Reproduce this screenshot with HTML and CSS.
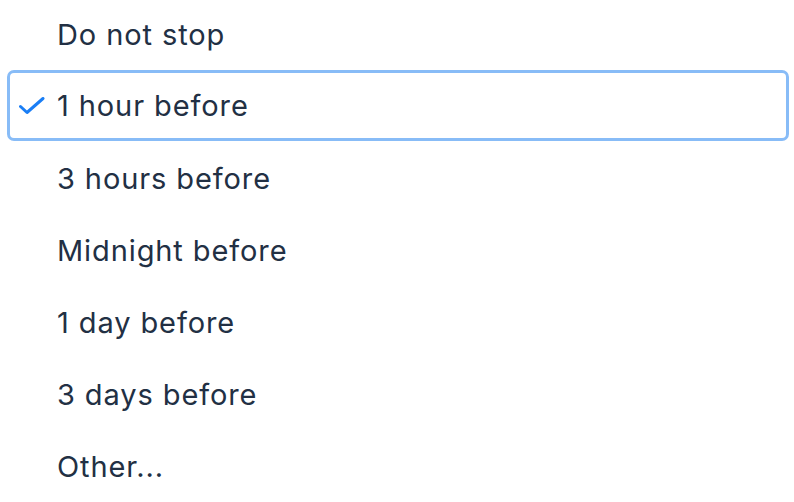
FILE: index.html
```html
<!DOCTYPE html>
<html>
<head>
<meta charset="utf-8">
<link rel="stylesheet" href="styles.css">
</head>
<body>
<ul class="menu">
  <li class="item"><span class="check"></span><span class="label">Do not stop</span></li>
  <li class="item selected"><span class="check"><svg viewBox="0 0 26 18" width="26" height="18"><path d="M1.5 9.5 L8 15.5 L24 1.5" fill="none" stroke="#1a7ef5" stroke-width="3" stroke-linecap="round" stroke-linejoin="round"/></svg></span><span class="label">1 hour before</span></li>
  <li class="item"><span class="check"></span><span class="label">3 hours before</span></li>
  <li class="item"><span class="check"></span><span class="label">Midnight before</span></li>
  <li class="item"><span class="check"></span><span class="label">1 day before</span></li>
  <li class="item"><span class="check"></span><span class="label">3 days before</span></li>
  <li class="item"><span class="check"></span><span class="label">Other...</span></li>
</ul>
</body>
</html>
```
FILE: styles.css
```css
html, body {
  margin: 0;
  padding: 0;
  background: #ffffff;
}
body {
  font-family: Inter, "Noto Sans", sans-serif;
  color: #223044;
}
.menu {
  list-style: none;
  margin: 0;
  padding: 0 5px 0 7px;
  display: flex;
  flex-direction: column;
}
.item {
  height: 72px;
  display: flex;
  align-items: center;
  box-sizing: border-box;
  border: 3px solid transparent;
  border-radius: 7px;
  font-size: 29px;
  margin-top: -1px;
  margin-bottom: 1px;
}
.item:first-child {
  margin-top: -2px;
}
.selected {
  border-color: #88bcf7;
  height: 71px;
  margin-bottom: 2px;
}
.check {
  width: 47px;
  display: flex;
  align-items: center;
  padding-left: 9px;
  box-sizing: border-box;
}
.check svg {
  display: block;
}
.label {
  letter-spacing: 0.9px;
}
```
